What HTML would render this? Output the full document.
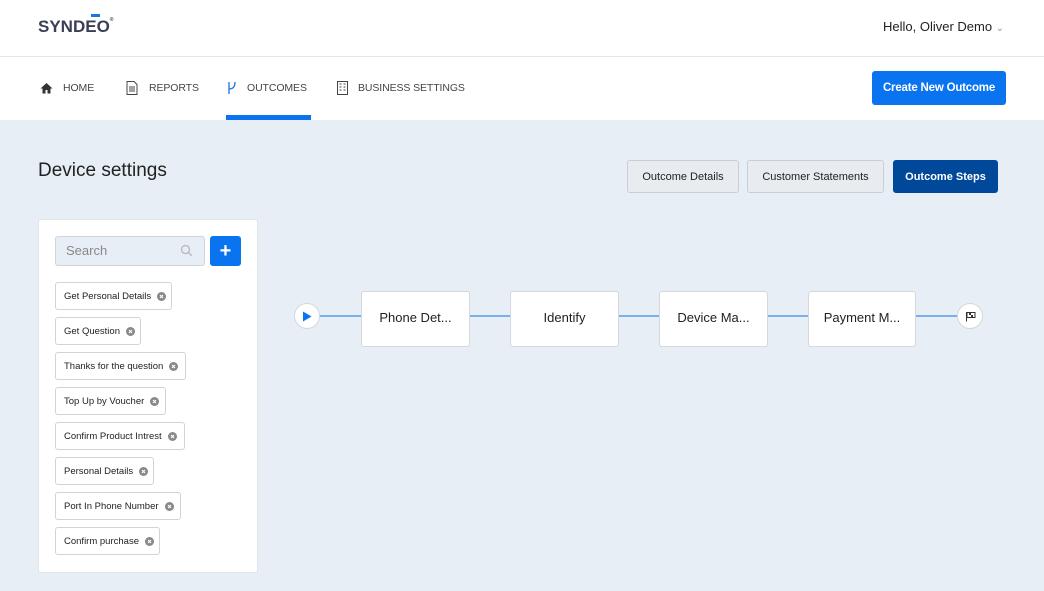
<!DOCTYPE html><html><head><style>
*{box-sizing:border-box;margin:0;padding:0}
body{width:1044px;height:591px;background:#e8eef5;font-family:"Liberation Sans",sans-serif;position:relative;overflow:hidden;color:#222}
.a{position:absolute}
.top{left:0;top:0;width:1044px;height:120px;background:#fff}
.hr{left:0;top:56px;width:1044px;height:1px;background:#e6e6e6}
.nav{top:82px;font-size:10.5px;color:#444;letter-spacing:-.1px}
.btn{border:1px solid #c9ced4;background:#e8ecf0;border-radius:3px;font-size:11px;color:#222;display:flex;align-items:center;justify-content:center}
.tag{left:55px;height:28px;border:1px solid #d0d4d8;border-radius:3px;background:#fff;font-size:9.5px;color:#222;display:flex;align-items:center;padding-left:8px}
.tag svg{margin-left:6px}
.node{top:291px;width:109px;height:56px;background:#fff;border:1px solid #d4d8dc;border-radius:3px;display:flex;align-items:center;justify-content:center;font-size:13px;color:#222;padding-bottom:4px}
.circ{top:303px;width:26px;height:26px;border-radius:50%;background:#fff;border:1px solid #d4d8dc;display:flex;align-items:center;justify-content:center}
</style></head><body>
<div class="a top"></div><div class="a hr"></div>
<div class="a" style="left:38px;top:17px;font-size:17px;font-weight:bold;color:#3a3f55;letter-spacing:0">SYNDEO<span style="font-size:5px;vertical-align:top">®</span></div>
<div class="a" style="left:91px;top:14px;width:9px;height:3px;background:#1a73e8"></div>
<div class="a" style="left:883px;top:19px;font-size:13px;color:#222">Hello, Oliver Demo <span style="color:#999;font-size:10px">&#8964;</span></div>
<svg class="a" style="left:40px;top:82px" width="13" height="12" viewBox="0 0 13 12"><path d="M6.5 1L0.5 6.5H2.5V11.5H5.5V8H7.5V11.5H10.5V6.5H12.5Z" fill="#333"/></svg>
<div class="a nav" style="left:63px">HOME</div>
<svg class="a" style="left:126px;top:81px" width="12" height="14" viewBox="0 0 12 14"><path d="M1 .5H8L11 3.5V13.5H1Z" fill="none" stroke="#444"/><path d="M3 6H9M3 8H9M3 10H9" stroke="#444"/></svg>
<div class="a nav" style="left:149px">REPORTS</div>
<svg class="a" style="left:227px;top:81px" width="10" height="14" viewBox="0 0 10 14"><path d="M2 1V13M2 8C6 8 8 6 8 1" fill="none" stroke="#1a73e8" stroke-width="1.3"/></svg>
<div class="a nav" style="left:247px">OUTCOMES</div>
<div class="a" style="left:226px;top:115px;width:85px;height:5px;background:#0a73f0"></div>
<svg class="a" style="left:337px;top:81px" width="11" height="14" viewBox="0 0 11 14"><rect x=".5" y=".5" width="10" height="13" fill="none" stroke="#444"/><path d="M2.5 3h2M6.5 3h2M2.5 6h2M6.5 6h2M2.5 9h2M6.5 9h2" stroke="#444"/></svg>
<div class="a nav" style="left:358px">BUSINESS SETTINGS</div>
<div class="a" style="left:872px;top:71px;width:134px;height:34px;background:#0a73f0;border-radius:3px;color:#fff;font-size:11.5px;font-weight:bold;display:flex;align-items:center;justify-content:center;letter-spacing:-.2px">Create New Outcome</div>
<div class="a" style="left:38px;top:160px;font-size:19px;color:#222">Device settings</div>
<div class="a btn" style="left:627px;top:160px;width:112px;height:33px">Outcome Details</div>
<div class="a btn" style="left:747px;top:160px;width:137px;height:33px">Customer Statements</div>
<div class="a btn" style="left:893px;top:160px;width:105px;height:33px;background:#00489a;border-color:#00489a;color:#fff;font-weight:bold">Outcome Steps</div>
<div class="a" style="left:38px;top:219px;width:220px;height:354px;background:#fff;border:1px solid #e0e4e8;border-radius:3px"></div>
<div class="a" style="left:55px;top:236px;width:150px;height:30px;background:#e8eef5;border:1px solid #cfd5db;border-radius:3px;font-size:13px;color:#888;padding:6px 10px">Search</div>
<svg class="a" style="left:180px;top:244px" width="13" height="13" viewBox="0 0 13 13"><circle cx="5.5" cy="5.5" r="4" fill="none" stroke="#bbb" stroke-width="1.4"/><path d="M8.5 8.5L12 12" stroke="#bbb" stroke-width="1.4"/></svg>
<div class="a" style="left:210px;top:236px;width:31px;height:30px;background:#0a73f0;border-radius:3px;color:#fff;font-size:20px;font-weight:bold;display:flex;align-items:center;justify-content:center">+</div>
<div class="a tag" style="top:282px;width:117px">Get Personal Details<svg width="9" height="9"><circle cx="4.5" cy="4.5" r="4.5" fill="#888"/><path d="M3 3L6 6M6 3L3 6" stroke="#fff" stroke-width="1.2"/></svg></div>
<div class="a tag" style="top:317px;width:86px">Get Question<svg width="9" height="9"><circle cx="4.5" cy="4.5" r="4.5" fill="#888"/><path d="M3 3L6 6M6 3L3 6" stroke="#fff" stroke-width="1.2"/></svg></div>
<div class="a tag" style="top:352px;width:131px">Thanks for the question<svg width="9" height="9"><circle cx="4.5" cy="4.5" r="4.5" fill="#888"/><path d="M3 3L6 6M6 3L3 6" stroke="#fff" stroke-width="1.2"/></svg></div>
<div class="a tag" style="top:387px;width:111px">Top Up by Voucher<svg width="9" height="9"><circle cx="4.5" cy="4.5" r="4.5" fill="#888"/><path d="M3 3L6 6M6 3L3 6" stroke="#fff" stroke-width="1.2"/></svg></div>
<div class="a tag" style="top:422px;width:130px">Confirm Product Intrest<svg width="9" height="9"><circle cx="4.5" cy="4.5" r="4.5" fill="#888"/><path d="M3 3L6 6M6 3L3 6" stroke="#fff" stroke-width="1.2"/></svg></div>
<div class="a tag" style="top:457px;width:99px">Personal Details<svg width="9" height="9"><circle cx="4.5" cy="4.5" r="4.5" fill="#888"/><path d="M3 3L6 6M6 3L3 6" stroke="#fff" stroke-width="1.2"/></svg></div>
<div class="a tag" style="top:492px;width:126px">Port In Phone Number<svg width="9" height="9"><circle cx="4.5" cy="4.5" r="4.5" fill="#888"/><path d="M3 3L6 6M6 3L3 6" stroke="#fff" stroke-width="1.2"/></svg></div>
<div class="a tag" style="top:527px;width:105px">Confirm purchase<svg width="9" height="9"><circle cx="4.5" cy="4.5" r="4.5" fill="#888"/><path d="M3 3L6 6M6 3L3 6" stroke="#fff" stroke-width="1.2"/></svg></div>
<div class="a" style="left:310px;top:315px;width:660px;height:2px;background:#7ab0ee"></div>
<div class="a circ" style="left:294px"><svg width="10" height="11"><path d="M1 0.5L9.5 5.5L1 10.5Z" fill="#0a73f0"/></svg></div>
<div class="a circ" style="left:957px"><svg width="11" height="11" viewBox="0 0 11 11"><path d="M1.5 1V10.5" stroke="#333"/><path d="M2 1.5H10V6.5H2Z" fill="none" stroke="#333"/><path d="M4 1.5h2v2.5h2v2.5H6V4H4Z" fill="#333"/></svg></div>
<div class="a node" style="left:361px">Phone Det...</div>
<div class="a node" style="left:510px">Identify</div>
<div class="a node" style="left:659px">Device Ma...</div>
<div class="a node" style="left:808px;width:108px">Payment M...</div>
</body></html>
